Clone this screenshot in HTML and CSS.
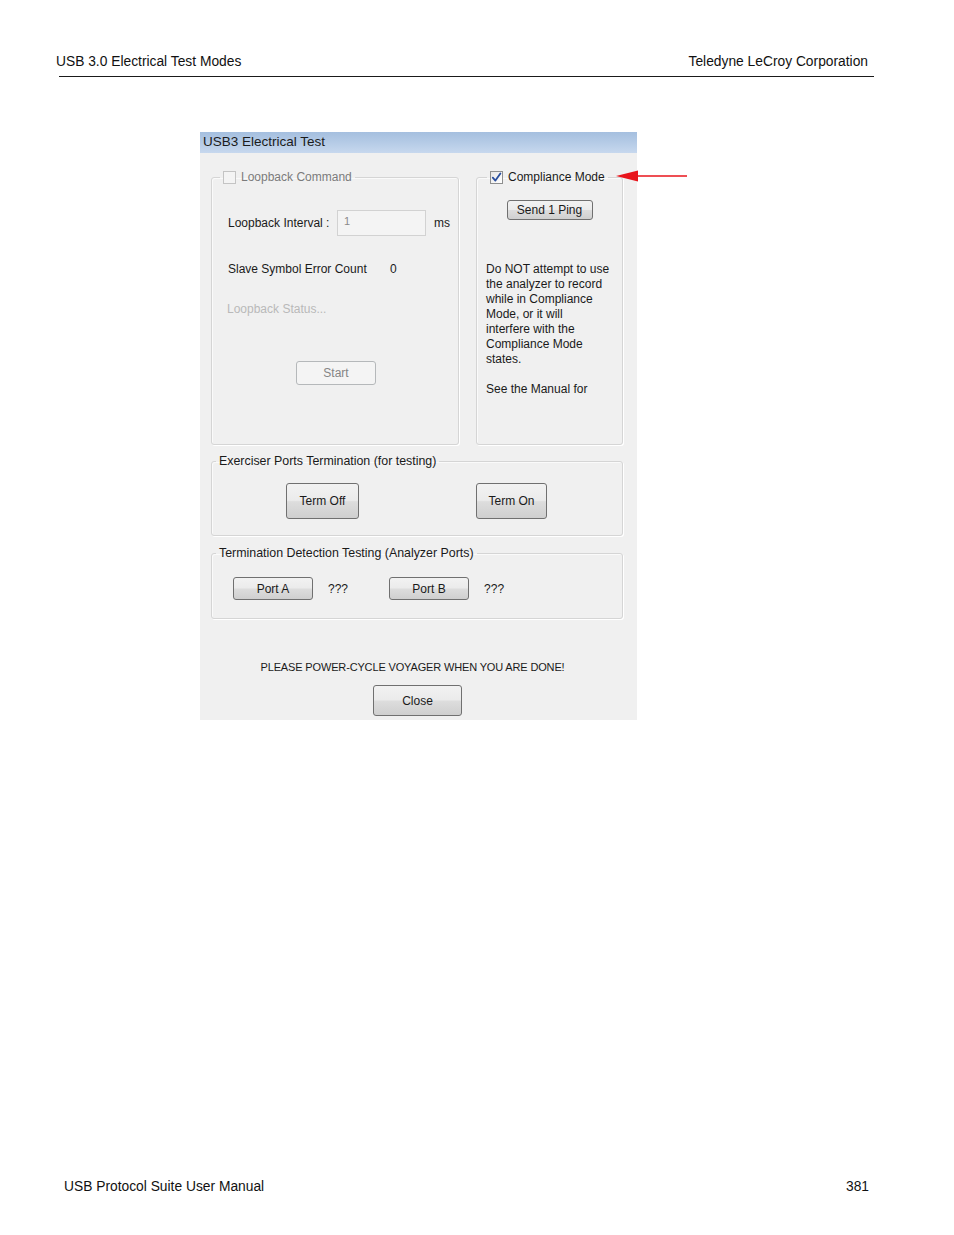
FILE: index.html
```html
<!DOCTYPE html>
<html>
<head>
<meta charset="utf-8">
<title>USB 3.0 Electrical Test Modes</title>
<link rel="stylesheet" href="styles.css">
</head>
<body>
<div class="page">
  <header class="doc-header">
    <span class="hdr-left">USB 3.0 Electrical Test Modes</span>
    <span class="hdr-right">Teledyne LeCroy Corporation</span>
  </header>

  <div class="dialog">
    <div class="titlebar">USB3 Electrical Test</div>
    <div class="dlg-body">
      <div class="top-row">
        <fieldset class="group group-loop">
          <legend class="legend-check disabled"><span class="cbox cbox-disabled"></span>Loopback Command</legend>
          <div class="row interval-row">
            <span class="lbl-interval">Loopback Interval :</span>
            <span class="input-box">1</span>
            <span class="unit">ms</span>
          </div>
          <div class="row slave-row">
            <span class="lbl-slave">Slave Symbol Error Count</span>
            <span>0</span>
          </div>
          <div class="row status-row">Loopback Status...</div>
          <div class="center-row start-row"><span class="btn btn-disabled btn-start">Start</span></div>
        </fieldset>

        <fieldset class="group group-comp">
          <legend class="legend-check"><span class="cbox cbox-checked"><svg width="11" height="11" viewBox="0 0 11 11"><path d="M1.8 5.6 L4.4 8.6 L9.4 1.4" fill="none" stroke="#2a4f9e" stroke-width="1.8" stroke-linecap="round" stroke-linejoin="round"/></svg></span>Compliance Mode</legend>
          <div class="center-row ping-row"><span class="btn btn-ping">Send 1 Ping</span></div>
          <div class="warn-text">Do NOT attempt to use<br>the analyzer to record<br>while in Compliance<br>Mode, or it will<br>interfere with the<br>Compliance Mode<br>states.<br><br>See the Manual for</div>
        </fieldset>
      </div>

      <fieldset class="group group-exer">
        <legend class="legend-plain">Exerciser Ports Termination (for testing)</legend>
        <div class="exer-row">
          <span class="btn btn-termoff">Term Off</span>
          <span class="btn btn-termon">Term On</span>
        </div>
      </fieldset>

      <fieldset class="group group-det">
        <legend class="legend-plain">Termination Detection Testing (Analyzer Ports)</legend>
        <div class="det-row">
          <span class="btn btn-port">Port A</span>
          <span class="qmark qa">???</span>
          <span class="btn btn-port">Port B</span>
          <span class="qmark">???</span>
        </div>
      </fieldset>

      <div class="power-note">PLEASE POWER-CYCLE VOYAGER WHEN YOU ARE DONE!</div>
      <div class="center-row close-row"><span class="btn btn-close">Close</span></div>
    </div>
  </div>

  <svg class="red-arrow" width="72" height="14" viewBox="0 0 72 14">
    <line x1="18" y1="7" x2="71" y2="7" stroke="#e8141b" stroke-width="1.6"/>
    <polygon points="0,7 22,1.5 22,12.5" fill="#e8141b"/>
  </svg>

  <footer class="doc-footer">
    <span>USB Protocol Suite User Manual</span>
    <span>381</span>
  </footer>
</div>
</body>
</html>
```

FILE: styles.css
```css
html, body {
  margin: 0;
  padding: 0;
  background: #ffffff;
}

.page {
  position: relative;
  width: 954px;
  min-height: 1235px;
  display: flex;
  flex-direction: column;
  font-family: "Liberation Sans", Arial, sans-serif;
  color: #111;
}

/* document header */
.doc-header {
  margin: 54px 0 0 59px;
  width: 815px;
  display: flex;
  justify-content: space-between;
  font-size: 13.8px;
  line-height: 16px;
  padding-bottom: 6px;
  border-bottom: 1px solid #1a1a1a;
}
.hdr-left { margin-left: -3px; }
.hdr-right { padding-right: 6px; }

/* dialog */
.dialog {
  margin: 55px 0 0 200px;
  width: 437px;
  height: 588px;
  background: #f0f0f0;
  display: flex;
  flex-direction: column;
}
.titlebar {
  height: 21px;
  line-height: 20px;
  padding-left: 3px;
  font-size: 13.5px;
  color: #1b1b1b;
  background: linear-gradient(to bottom, #a5bfdf 0%, #b5cbe6 50%, #c7d8ee 100%);
}
.dlg-body {
  flex: 1;
  padding: 0 14px 0 11px;
  font-size: 12px;
  color: #1a1a1a;
}

.top-row {
  display: flex;
  gap: 17px;
  margin-top: 16px;
}

.group {
  margin: 0;
  padding: 0;
  min-inline-size: 0;
  border: 1px solid #d5d5d5;
  border-radius: 3px;
  box-shadow: 1px 1px 0 #ffffff, inset 1px 1px 0 #fafafa;
  box-sizing: border-box;
}
.group legend {
  line-height: 16px;
  white-space: nowrap;
}

.group-loop {
  width: 248px;
  height: 276px;
}
.group-loop legend {
  margin-left: 8px;
  padding: 0 3px;
}
.group-comp {
  width: 147px;
  height: 276px;
}
.group-comp legend {
  margin-left: 10px;
  padding: 0 3px;
}

.legend-check {
  display: flex;
  align-items: center;
}
.legend-check.disabled { color: #7b7b7b; }

.cbox {
  display: inline-flex;
  align-items: center;
  justify-content: center;
  width: 13px;
  height: 13px;
  box-sizing: border-box;
  margin-right: 5px;
  border: 1px solid #8e8f8f;
  background: linear-gradient(to bottom right, #e6e6e6, #ffffff);
}
.cbox-disabled {
  border-color: #c4c4c4;
  background: #f4f4f4;
}
.cbox-checked svg { display: block; }

.row {
  display: flex;
  align-items: center;
  padding-left: 16px;
}
.interval-row {
  margin-top: 25px;
  height: 26px;
}
.lbl-interval { width: 109px; }
.input-box {
  width: 89px;
  height: 26px;
  box-sizing: border-box;
  border: 1px solid #d2d2d2;
  background: #f4f4f4;
  color: #8a8a8a;
  padding: 4px 0 0 6px;
  align-self: flex-start;
  font-size: 11px;
  line-height: 13px;
}
.unit { margin-left: 8px; }

.slave-row {
  margin-top: 25px;
  line-height: 16px;
}
.lbl-slave { width: 162px; }

.status-row {
  margin-top: 24px;
  line-height: 16px;
  padding-left: 15px;
  color: #b9b9b9;
}

.center-row {
  display: flex;
  justify-content: center;
}

.btn {
  display: inline-flex;
  align-items: center;
  justify-content: center;
  box-sizing: border-box;
  border: 1px solid #707070;
  border-radius: 3px;
  background: linear-gradient(to bottom, #f2f2f2 0%, #ebebeb 48%, #dddddd 52%, #cfcfcf 100%);
  color: #1a1a1a;
  white-space: nowrap;
}
.btn-disabled {
  border-color: #b5b8ba;
  background: #f4f4f4;
  color: #858585;
}

.start-row { margin-top: 44px; }
.btn-start { width: 80px; height: 24px; margin-left: 2px; }

.ping-row { margin-top: 15px; }
.btn-ping { width: 86px; height: 20px; }

.warn-text {
  margin-top: 42px;
  padding-left: 9px;
  line-height: 15px;
  white-space: nowrap;
}

.group-exer {
  margin-top: 8px;
  width: 412px;
  height: 83px;
}
.group-exer legend,
.group-det legend {
  margin-left: 4px;
  padding: 0 3px;
  font-size: 12.4px;
}
.exer-row {
  display: flex;
  margin-top: 14px;
  padding-left: 74px;
  gap: 117px;
}
.btn-termoff { width: 73px; height: 36px; }
.btn-termon { width: 71px; height: 36px; }

.group-det {
  margin-top: 9px;
  width: 412px;
  height: 74px;
}
.det-row {
  display: flex;
  align-items: center;
  margin-top: 16px;
  padding-left: 21px;
}
.btn-port { width: 80px; height: 23px; }
.qmark { margin-left: 15px; }
.qa { margin-right: 41px; }

.power-note {
  margin-top: 40px;
  line-height: 16px;
  text-align: center;
  font-size: 11px;
  letter-spacing: -0.15px;
  padding-right: 9px;
}
.close-row { margin-top: 10px; }
.btn-close { width: 89px; height: 31px; margin-left: 1px; }

/* annotation arrow overlay */
.red-arrow {
  position: absolute;
  left: 616px;
  top: 169px;
}

/* document footer */
.doc-footer {
  margin: auto 0 0 64px;
  width: 805px;
  display: flex;
  justify-content: space-between;
  font-size: 13.8px;
  line-height: 16px;
  padding-bottom: 40px;
}
```
